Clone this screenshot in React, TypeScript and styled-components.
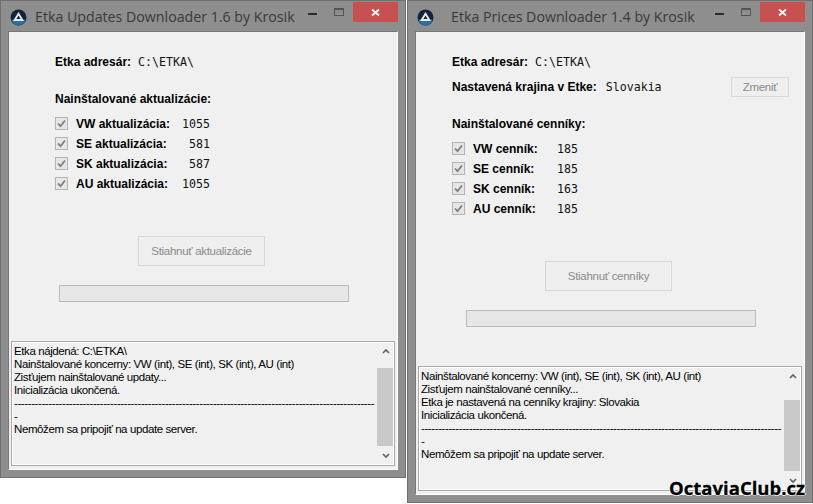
import styled, { createGlobalStyle } from "styled-components";

type Row = { name: string; count: string };

type Props = {
  title: string;
  left: number;
  height: number;
  titleGap: number;
  country?: boolean;
  installed: string;
  rows: Row[];
  labelWidth: number;
  countWidth: number;
  action: string;
  log: string[];
  thumbTop: number;
  thumbHeight: number;
};

const GlobalStyle = createGlobalStyle`
  html, body {
    margin: 0;
    background: #fff;
    overflow: hidden;
  }
`;

function Logo() {
  return (
    <svg width="17" height="17" viewBox="0 0 17 17">
      <circle cx="8.5" cy="8.5" r="8" fill="#10243c" />
      <path d="M1.5 10.5a7 6 0 0 0 14 0z" fill="#2a6f9e" />
      <path d="M8.5 3 14 12H3z" fill="#e8ecef" />
      <path d="M8.5 6.6 10.6 10H6.4z" fill="#10243c" />
    </svg>
  );
}

function Arrow({ up }: { up?: boolean }) {
  return (
    <svg width="8" height="6" viewBox="0 0 8 6">
      <path
        d={up ? "M1 5 4 2l3 3" : "M1 1l3 3 3-3"}
        fill="none"
        stroke="#606060"
        strokeWidth="1.6"
      />
    </svg>
  );
}

function Downloader(p: Props) {
  return (
    <Window $left={p.left} $height={p.height}>
      <TitleBar>
        <Logo />
        <Title $gap={p.titleGap}>{p.title}</Title>
        <Minimize />
        <Maximize />
        <Close>
          <svg width="9" height="9" viewBox="0 0 9 9">
            <path d="M1 1.5l7 6M8 1.5l-7 6" stroke="#fff" strokeWidth="1.7" />
          </svg>
        </Close>
      </TitleBar>
      <Client>
        <Info $indent={p.country ? 36 : 46}>
          <InfoLine>
            <Bold>Etka adresár:</Bold>
            <Mono>C:\ETKA\</Mono>
          </InfoLine>
          {p.country && (
            <InfoLine $top={11} $gap={9}>
              <Bold>Nastavená krajina v Etke:</Bold>
              <Mono>Slovakia</Mono>
              <SmallButton>Zmeniť</SmallButton>
            </InfoLine>
          )}
          <Heading>{p.installed}</Heading>
          <Rows>
            {p.rows.map((row) => (
              <CheckRow key={row.name}>
                <Check>
                  <svg width="9" height="9" viewBox="0 0 9 9">
                    <path
                      d="M1 4.5 3.5 7.2 8 1.5"
                      fill="none"
                      stroke="#7c7c7c"
                      strokeWidth="1.8"
                    />
                  </svg>
                </Check>
                <RowLabel $width={p.labelWidth}>{row.name}</RowLabel>
                <Count $width={p.countWidth}>{row.count}</Count>
              </CheckRow>
            ))}
          </Rows>
        </Info>
        <MainButton>{p.action}</MainButton>
        <Progress />
        <LogBox>
          <LogText>
            {p.log.map((line, i) => (
              <div key={i}>{line}</div>
            ))}
          </LogText>
          <Scroll>
            <ScrollButton>
              <Arrow up />
            </ScrollButton>
            <Track>
              <Thumb style={{ top: p.thumbTop, height: p.thumbHeight }} />
            </Track>
            <ScrollButton>
              <Arrow />
            </ScrollButton>
          </Scroll>
        </LogBox>
      </Client>
    </Window>
  );
}

const DASHES = "-".repeat(105);

export default function App() {
  return (
    <Desktop>
      <GlobalStyle />
      <Downloader
        title="Etka Updates Downloader 1.6 by Krosik"
        left={0}
        height={478}
        titleGap={8}
        installed="Nainštalované aktualizácie:"
        rows={[
          { name: "VW aktualizácia:", count: "1055" },
          { name: "SE aktualizácia:", count: "581" },
          { name: "SK aktualizácia:", count: "587" },
          { name: "AU aktualizácia:", count: "1055" },
        ]}
        labelWidth={106}
        countWidth={28}
        action="Stiahnuť aktualizácie"
        log={[
          "Etka nájdená: C:\\ETKA\\",
          "Nainštalované koncerny: VW (int), SE (int), SK (int), AU (int)",
          "Zisťujem nainštalované updaty...",
          "Inicializácia ukončená.",
          DASHES,
          "-",
          "Nemôžem sa pripojiť na update server.",
        ]}
        thumbTop={9}
        thumbHeight={78}
      />
      <Downloader
        title="Etka Prices Downloader 1.4 by Krosik"
        left={407}
        height={503}
        titleGap={17}
        country
        installed="Nainštalované cenníky:"
        rows={[
          { name: "VW cenník:", count: "185" },
          { name: "SE cenník:", count: "185" },
          { name: "SK cenník:", count: "163" },
          { name: "AU cenník:", count: "185" },
        ]}
        labelWidth={84}
        countWidth={21}
        action="Stiahnuť cenníky"
        log={[
          "Nainštalované koncerny: VW (int), SE (int), SK (int), AU (int)",
          "Zisťujem nainštalované cenníky...",
          "Etka je nastavená na cenníky krajiny: Slovakia",
          "Inicializácia ukončená.",
          DASHES,
          "-",
          "Nemôžem sa pripojiť na update server.",
        ]}
        thumbTop={16}
        thumbHeight={71}
      />
      <Watermark>OctaviaClub.cz</Watermark>
    </Desktop>
  );
}

const Desktop = styled.div`
  position: relative;
  width: 813px;
  height: 504px;
  overflow: hidden;
  background: #fff;
`;

const Window = styled.div<{ $left: number; $height: number }>`
  position: absolute;
  top: 0;
  left: ${(p) => p.$left}px;
  box-sizing: border-box;
  width: 406px;
  height: ${(p) => p.$height}px;
  display: flex;
  flex-direction: column;
  padding: 0 7px 7px 7px;
  background: #8e8e8e;
  border: 1px solid #6f6f6f;
`;

const TitleBar = styled.div`
  flex: 0 0 30px;
  display: flex;
  align-items: flex-start;
  padding: 8px 0 0 2px;
  box-sizing: border-box;
`;

const Title = styled.div<{ $gap: number }>`
  margin: -2px 0 0 ${(p) => p.$gap}px;
  font: 14.2px/20px "Open Sans", sans-serif;
  color: #3a3a3a;
  white-space: nowrap;
  flex: 1;
`;

const Minimize = styled.div`
  width: 9px;
  height: 2px;
  margin: 4px 17px 0 0;
  background: #2b2b2b;
`;

const Maximize = styled.div`
  box-sizing: border-box;
  width: 10px;
  height: 8px;
  margin: -1px 9px 0 0;
  border: 1px solid #555;
  border-top-width: 2px;
`;

const Close = styled.div`
  width: 45px;
  height: 20px;
  margin: -7px 0 0 0;
  display: flex;
  align-items: center;
  justify-content: center;
  background: #c75050;
`;

const Client = styled.div`
  flex: 1;
  min-height: 0;
  display: flex;
  flex-direction: column;
  background: #f0f0f0;
  border: 1px solid #6f6f6f;
  border-color: #777 #fff #fff #777;
  padding-top: 23px;
`;

const Info = styled.div<{ $indent: number }>`
  padding-left: ${(p) => p.$indent}px;
  padding-right: 10px;
`;

const Bold = styled.span`
  font: bold 12px/14px "Liberation Sans", sans-serif;
  color: #000;
  white-space: nowrap;
`;

const InfoLine = styled.div<{ $top?: number; $gap?: number }>`
  display: flex;
  align-items: center;
  gap: ${(p) => p.$gap ?? 7}px;
  height: 14px;
  margin-top: ${(p) => p.$top ?? 0}px;
`;

const Mono = styled.span`
  font: 11.6px/14px "DejaVu Sans Mono", monospace;
  color: #111;
  white-space: nowrap;
`;

const Heading = styled(Bold)`
  display: block;
  margin-top: 23px;
`;

const Rows = styled.div`
  display: flex;
  flex-direction: column;
  gap: 7px;
  margin-top: 11px;
`;

const CheckRow = styled.div`
  display: flex;
  align-items: center;
  height: 13px;
`;

const Check = styled.span`
  box-sizing: border-box;
  width: 13px;
  height: 13px;
  display: flex;
  align-items: center;
  justify-content: center;
  background: #e6e6e6;
  border: 1px solid #b4b4b4;
`;

const RowLabel = styled(Bold)<{ $width: number }>`
  width: ${(p) => p.$width}px;
  margin-left: 8px;
`;

const Count = styled(Mono)<{ $width: number }>`
  width: ${(p) => p.$width}px;
  text-align: right;
`;

const DisabledButton = styled.div`
  box-sizing: border-box;
  display: flex;
  align-items: center;
  justify-content: center;
  background: #efefef;
  border: 1px solid #d8d8d8;
  font: 11.5px "Liberation Sans", sans-serif;
  letter-spacing: -0.3px;
  color: #8a8a8a;
  white-space: nowrap;
`;

const SmallButton = styled(DisabledButton)`
  width: 58px;
  height: 20px;
  margin-left: auto;
  margin-right: 5px;
`;

const MainButton = styled(DisabledButton)`
  width: 127px;
  height: 30px;
  margin: 46px 0 0 129px;
`;

const Progress = styled.div`
  box-sizing: border-box;
  width: 290px;
  height: 17px;
  margin: 19px 0 0 50px;
  background: #e6e6e6;
  border: 1px solid #bcbcbc;
`;

const LogBox = styled.div`
  box-sizing: border-box;
  height: 125px;
  margin: 39px 2px 0 2px;
  display: flex;
  border: 1px solid #a9a9a9;
  outline: 1px solid #fff;
  outline-offset: -2px;
`;

const LogText = styled.div`
  flex: 1;
  min-width: 0;
  overflow: hidden;
  padding: 3px 0 0 2px;
  font: 11.5px/13px "Liberation Sans", sans-serif;
  letter-spacing: -0.4px;
  color: #000;
  white-space: nowrap;
`;

const Scroll = styled.div`
  flex: 0 0 17px;
  display: flex;
  flex-direction: column;
  margin: 1px 0 1px 1px;
  background: #f0f0f0;
`;

const ScrollButton = styled.div`
  flex: 0 0 16px;
  display: flex;
  align-items: center;
  justify-content: center;
`;

const Track = styled.div`
  flex: 1;
  position: relative;
`;

const Thumb = styled.div`
  position: absolute;
  left: 0;
  right: 1px;
  background: #c8c8c8;
`;

const Watermark = styled.div`
  position: absolute;
  right: 8px;
  bottom: 6px;
  font: 700 18.5px/20px "Open Sans", sans-serif;
  color: #000;
  -webkit-text-stroke: 0.3px #000;
  text-shadow: 1px 0 #fff, -1px 0 #fff, 0 1px #fff;
`;
